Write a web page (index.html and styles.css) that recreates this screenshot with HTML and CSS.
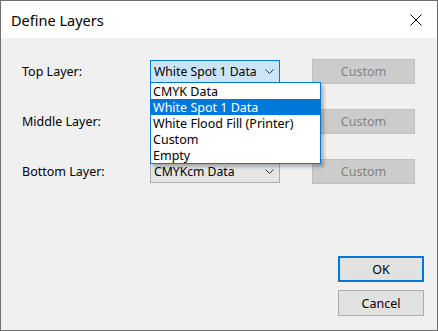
FILE: index.html
```html
<!DOCTYPE html>
<html lang="en">
<head>
    <meta charset="UTF-8">
    <meta name="viewport" content="width=device-width, initial-scale=1.0">
    <title>Define Layers</title>
    <link rel="stylesheet" href="styles.css">
</head>
<body>
<div class="window">
    <!-- Title bar -->
    <div class="titlebar">
        <span class="title">Define Layers</span>
        <svg class="close" width="12" height="12" viewBox="0 0 12 12">
            <path d="M0.5 0.5 L11.5 11.5 M11.5 0.5 L0.5 11.5" stroke="#000" stroke-width="1" fill="none"/>
        </svg>
    </div>

    <div class="content">
        <div class="layer-row">
            <span class="label">Top Layer:</span>
            <div class="combo open">
                <span>White Spot 1 Data</span>
                <svg class="chevron" width="9" height="5" viewBox="0 0 9 5"><path d="M0.5 0.5 L4.5 4.5 L8.5 0.5" stroke="#333" fill="none"/></svg>
            </div>
            <div class="btn disabled">Custom</div>

            <!-- open dropdown list -->
            <ul class="dropdown">
                <li>CMYK Data</li>
                <li class="selected">White Spot 1 Data</li>
                <li>White Flood Fill (Printer)</li>
                <li>Custom</li>
                <li>Empty</li>
            </ul>
        </div>
        <div class="layer-row">
            <span class="label">Middle Layer:</span>
            <div class="combo">
                <span></span>
                <svg class="chevron" width="9" height="5" viewBox="0 0 9 5"><path d="M0.5 0.5 L4.5 4.5 L8.5 0.5" stroke="#333" fill="none"/></svg>
            </div>
            <div class="btn disabled">Custom</div>
        </div>
        <div class="layer-row">
            <span class="label">Bottom Layer:</span>
            <div class="combo">
                <span>CMYKcm Data</span>
                <svg class="chevron" width="9" height="5" viewBox="0 0 9 5"><path d="M0.5 0.5 L4.5 4.5 L8.5 0.5" stroke="#333" fill="none"/></svg>
            </div>
            <div class="btn disabled">Custom</div>
        </div>

        <div class="actions">
            <div class="btn default">OK</div>
            <div class="btn">Cancel</div>
        </div>
    </div>
</div>
</body>
</html>
```

FILE: styles.css
```css
body {
    margin: 0;
    font-family: "Noto Sans", sans-serif;
    font-size: 12.5px;
    color: #000;
    background-color: #f0f0f0;
}

.window {
    width: 438px;
    height: 331px;
    box-sizing: border-box;
    border: 1px solid #6f6f6f;
    display: flex;
    flex-direction: column;
    background-color: #f0f0f0;
}

/* Title bar */
.titlebar {
    height: 37px;
    background-color: #fff;
    display: flex;
    align-items: center;
    justify-content: space-between;
    padding: 0 15px 0 10px;
}

.title {
    font-size: 14.5px;
}

.content {
    flex: 1;
    display: flex;
    flex-direction: column;
    gap: 25px;
    padding: 21px 21px 14px 21px;
}

.layer-row {
    position: relative;
    display: flex;
    align-items: center;
    height: 25px;
}

.label {
    width: 128px;
}

.combo {
    width: 130px;
    height: 23px;
    box-sizing: border-box;
    border: 1px solid #adadad;
    background-color: #e5e5e5;
    display: flex;
    align-items: center;
    justify-content: space-between;
    padding: 0 5px 0 3px;
    white-space: nowrap;
    overflow: hidden;
}

.combo span {
    font-size: 12.2px;
}

.combo.open {
    border-color: #0078d7;
    background-color: #cce4f7;
}

.chevron {
    flex-shrink: 0;
}

.btn {
    box-sizing: border-box;
    width: 86px;
    height: 26px;
    border: 1px solid #adadad;
    background-color: #e1e1e1;
    display: flex;
    align-items: center;
    justify-content: center;
}

.layer-row .btn {
    width: 103px;
    height: 25px;
    margin-left: 32px;
}

.btn.disabled {
    background-color: #cccccc;
    border-color: #bfbfbf;
    color: #838383;
}

.btn.default {
    border: 2px solid #0078d7;
}

/* Dropdown list lying over the rows */
.dropdown {
    position: absolute;
    left: 128px;
    top: 23px;
    width: 171px;
    margin: 0;
    padding: 0;
    list-style: none;
    background-color: #fff;
    border: 1px solid #0078d7;
    box-sizing: border-box;
    box-shadow: 3px 3px 3px rgba(0, 0, 0, 0.25);
    z-index: 10;
}

.dropdown li {
    height: 16px;
    line-height: 17px;
    padding-left: 2px;
    white-space: nowrap;
}

.dropdown li.selected {
    background-color: #0078d7;
    color: #fff;
}

.actions {
    margin-top: auto;
    align-self: flex-end;
    display: flex;
    flex-direction: column;
    gap: 8px;
    margin-right: -8px;
}
```
